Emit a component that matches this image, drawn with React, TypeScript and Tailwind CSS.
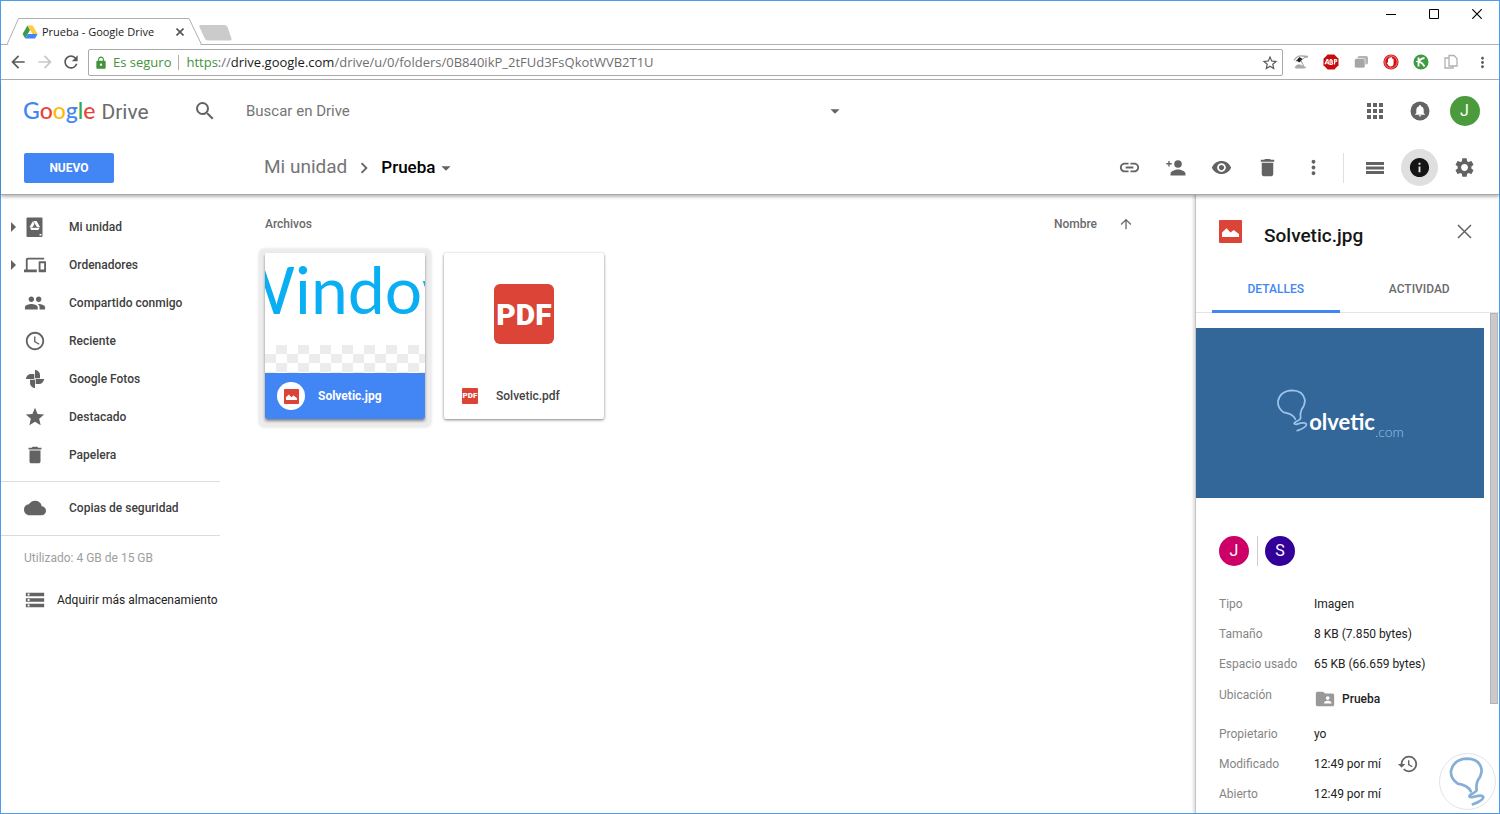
import type { ReactNode } from "react";
import {
  MdAccessTime,
  MdApps,
  MdArrowBack,
  MdArrowDropDown,
  MdArrowForward,
  MdArrowRight,
  MdArrowUpward,
  MdChevronRight,
  MdCloud,
  MdDelete,
  MdDevices,
  MdFolderShared,
  MdHistory,
  MdInfo,
  MdLink,
  MdLock,
  MdMoreVert,
  MdPeople,
  MdRefresh,
  MdRemoveRedEye,
  MdSearch,
  MdSettings,
  MdStar,
  MdStarBorder,
  MdStorage,
} from "react-icons/md";

const uiFont = "font-['Open_Sans','Noto_Sans',sans-serif]";

function DriveFavicon() {
  return (
    <svg width="16" height="16" viewBox="0 0 16 16" aria-hidden="true">
      <path d="M5.4 1.5 8 6 3.2 14.5.6 10z" fill="#3c9a4a" />
      <path d="M5.4 1.5h5.2L15.6 10h-5.2z" fill="#fdcb3f" />
      <path d="M5.9 10h9.7L13 14.5H3.2z" fill="#4285f4" />
    </svg>
  );
}

function BrowserTab() {
  return (
    <div className="relative ml-[6px] mt-[17px] h-[27px] w-[195px]">
      <svg
        className="absolute inset-0"
        width="195"
        height="27"
        viewBox="0 0 195 27"
        aria-hidden="true"
      >
        <path
          d="M0 26.5 L11.5 .5 H182 L194.5 26.5"
          fill="#fff"
          stroke="#b0b0b0"
        />
        <path d="M1.5 26.5H193" stroke="#fff" strokeWidth="1.2" />
      </svg>
      <div className="relative flex h-full items-center pl-[15px] pt-px text-[11px] text-[#1a1a1a]">
        <DriveFavicon />
        <span className="ml-[4px] w-[130px] whitespace-nowrap">
          Prueba - Google Drive
        </span>
        <button aria-label="Cerrar pestaña" className="flex w-4 justify-center">
          <svg width="8" height="8" viewBox="0 0 8 8">
            <path d="M.5.5l7 7M7.500.5l-7 7" stroke="#555" strokeWidth="1.6" />
          </svg>
        </button>
      </div>
    </div>
  );
}

function WindowBar() {
  return (
    <div className={`${uiFont} flex justify-between`}>
      <div className="flex flex-1 items-end border-b border-[#b0b0b0]">
        <div className="-mb-px flex items-end">
          <BrowserTab />
          <button aria-label="Nueva pestaña" className="-ml-[4px] pb-[3px]">
            <svg className="block" width="34" height="18" viewBox="0 0 34 18">
              <path
                d="M2.500 1h24q2 0 3 2l4 11.500q.6 2-2 2h-21.500q-2.500 0-3.500-2.500L1.300 2.500q-.4-1.500 1.200-1.500z"
                fill="#cbcbcb"
              />
            </svg>
          </button>
        </div>
      </div>
      <div className="flex h-[44px] items-start border-b border-[#b0b0b0] text-black">
        <button aria-label="Minimizar" className="flex w-[43px] justify-center pt-[8px]">
          <svg width="10" height="10" viewBox="0 0 10 10">
            <path d="M0 5.500h10" stroke="currentColor" />
          </svg>
        </button>
        <button aria-label="Maximizar" className="flex w-[43px] justify-center pt-[8px]">
          <svg width="10" height="10" viewBox="0 0 10 10">
            <path d="M.5.5h9v9h-9z" fill="none" stroke="currentColor" />
          </svg>
        </button>
        <button aria-label="Cerrar" className="flex w-[44px] justify-center pt-[8px]">
          <svg width="10" height="10" viewBox="0 0 10 10">
            <path d="M.3.300l9.400 9.400M9.700.3L.3 9.700" stroke="currentColor" strokeWidth="1.200" />
          </svg>
        </button>
      </div>
    </div>
  );
}

function Extension({ label, children }: { label: string; children: ReactNode }) {
  return (
    <button aria-label={label} className="flex w-[30px] justify-center">
      <svg width="16" height="16" viewBox="0 0 16 16">
        {children}
      </svg>
    </button>
  );
}

function AddressBar() {
  return (
    <div
      className={`${uiFont} flex h-[35px] items-center border-b border-[#b0b0b0] pl-[7px] text-[#5a5a5a]`}
    >
      <button aria-label="Atrás" className="w-[27px]">
        <MdArrowBack size={20} />
      </button>
      <button aria-label="Adelante" className="w-[26px] text-[#c8c8c8]">
        <MdArrowForward size={20} />
      </button>
      <button aria-label="Recargar" className="w-[27px]">
        <MdRefresh size={20} />
      </button>
      <div className="flex h-[27px] flex-1 items-center rounded-[2px] border border-[#a9a9a9] pl-[5px] pr-[3px] pt-px text-[13px]">
        <MdLock size={14} className="text-[#43933a]" />
        <span className="ml-[5px] whitespace-nowrap text-[#43933a]">Es seguro</span>
        <span className="mx-[7px] h-[15px] w-px bg-[#b0b0b0]" />
        <span className="flex-1 whitespace-nowrap text-[#6f6f6f]">
          <span className="text-[#43933a]">https</span>
          ://<span className="text-[#1a1a1a]">drive.google.com</span>
          /drive/u/0/folders/0B840ikP_2tFUd3FsQkotWVB2T1U
        </span>
        <button aria-label="Añadir a marcadores">
          <MdStarBorder size={18} />
        </button>
      </div>
      <div className="flex items-center pl-[3px]">
        <Extension label="Sombrilla">
          <path d="M1 6.500Q4 1.500 9 2l6 .5" stroke="#aaa" strokeWidth="1.300" fill="none" />
          <path d="M2.500 7.500 6.500 3l3 2-2 2.500-1.500 1-1.500-1.500z" fill="#222" />
          <path d="M8 6.500l3 6.500M9 5.500q3-3 5.500-2.500" stroke="#999" fill="none" />
          <path d="M1.500 13.500q2.500-4 5.500-3l6.500 3-2 1H3z" fill="#aaa" />
        </Extension>
        <Extension label="Bloqueador de anuncios">
          <path d="M4.700.5h6.600l4.200 4.200v6.600l-4.200 4.200H4.700L.5 11.300V4.700z" fill="#c70d0c" />
          <path
            d="M2 10.300 4 5.700h.8l.7 4.600M2.800 9h2.500M7 5.700v4.600h1.500q1.200-.2 1-1.300-.2-1-1.500-1 1.500-.2 1.200-1.300-.4-1-2.200-1M11.500 10.500V5.700h1.500q1 .2.800 1.200-.4 1-2 1"
            fill="none"
            stroke="#fff"
            strokeWidth="1.200"
          />
        </Extension>
        <Extension label="Ventanas">
          <rect x="4.500" y="2" width="10.500" height="8.500" rx="1.800" fill="#b4b4b4" />
          <rect x="1.500" y="4.500" width="10.500" height="9.500" rx="1.800" fill="#a6a6a6" stroke="#fff" strokeWidth=".6" />
        </Extension>
        <Extension label="Mano">
          <circle cx="8" cy="8" r="7.600" fill="#d50f0f" />
          <circle cx="8" cy="8" r="6.200" fill="none" stroke="#fff" strokeWidth=".5" />
          <path
            d="M5 8.500V5q.7-.8 1.300 0V3.800q.8-.9 1.500 0v-.5q.8-.8 1.400.2V5q.8-.7 1.400.2V9q.2 3.500-3 3.500Q5.500 12.500 3.700 9q.3-.9 1.300-.5z"
            fill="#fff"
          />
        </Extension>
        <Extension label="Kaspersky">
          <circle cx="8" cy="8" r="7.500" fill="#3d9b42" />
          <path d="M5.500 3.500v9M11.500 4q-5.500 1-5.500 4.500 2-1.500 5.500 4" fill="none" stroke="#fff" strokeWidth="1.800" />
          <path d="M3 7.500h4" stroke="#fff" />
        </Extension>
        <Extension label="Copiar">
          <path d="M6 1.500h5l3 3V12H6zM6 4H2v10h8v-2" fill="none" stroke="#b1b1b1" strokeWidth="1.300" />
        </Extension>
        <button aria-label="Menú" className="flex w-[33px] justify-center">
          <MdMoreVert size={17} />
        </button>
      </div>
    </div>
  );
}

function ActionButton({ label, children }: { label: string; children: ReactNode }) {
  return (
    <button aria-label={label} className="flex w-[45px] justify-center">
      {children}
    </button>
  );
}

function DriveHeader() {
  return (
    <header className="relative z-10 border-b border-[#a9a9a9] bg-white text-[#636363] shadow-[0_2px_3px_rgba(0,0,0,0.28)]">
      <div className="flex h-[61px] items-center pl-[22px] pr-[12px]">
        <a
          href="#inicio"
          className="flex w-[170px] items-baseline whitespace-nowrap leading-7"
        >
          <span className="font-['Lato',sans-serif] text-[23px] font-medium">
            <span className="text-[#4285f4]">G</span>
            <span className="text-[#ea4335]">o</span>
            <span className="text-[#fbbc05]">o</span>
            <span className="text-[#4285f4]">g</span>
            <span className="text-[#34a853]">l</span>
            <span className="text-[#ea4335]">e</span>
          </span>
          <span className="ml-[6px] text-[21px] text-[#6b6b6b]">Drive</span>
        </a>
        <button aria-label="Buscar">
          <MdSearch size={24} />
        </button>
        <input
          aria-label="Buscar en Drive"
          placeholder="Buscar en Drive"
          className="ml-[29px] w-[578px] pt-px text-[15px] outline-none placeholder:text-[#757575]"
        />
        <button aria-label="Opciones de búsqueda">
          <MdArrowDropDown size={22} />
        </button>
        <div className="ml-auto flex items-center">
          <ActionButton label="Aplicaciones">
            <MdApps size={24} />
          </ActionButton>
          <ActionButton label="Notificaciones">
            <svg width="20" height="20" viewBox="0 0 20 20">
              <circle cx="10" cy="10" r="9.500" fill="#636363" />
              <path
                d="M10 15.500a1.300 1.300 0 0 0 1.300-1.200H8.700A1.300 1.300 0 0 0 10 15.500zm3.700-3.200V9c0-2-1.100-3.400-2.800-3.800v-.4a.9.900 0 0 0-1.800 0v.4C7.400 5.600 6.300 7 6.300 9v3.300L5 13.300v.5h10v-.5z"
                fill="#fff"
              />
            </svg>
          </ActionButton>
          <ActionButton label="Cuenta de Google">
            <span className="flex size-[30px] items-center justify-center rounded-full bg-[#4b9a3b] text-base text-white">
              J
            </span>
          </ActionButton>
        </div>
      </div>
      <div className="flex h-[53px] items-center pl-[23px] pr-[12px]">
        <button className="h-[30px] w-[90px] rounded-[2px] bg-[#4285f4] text-xs font-bold text-white">
          NUEVO
        </button>
        <nav aria-label="Ruta" className="ml-[150px] flex items-center text-[19px]">
          <a href="#mi-unidad" className="text-[#757575]">
            Mi unidad
          </a>
          <MdChevronRight size={22} className="mx-[6px]" />
          <button className="flex items-center text-[17px] font-medium text-black">
            Prueba
            <MdArrowDropDown size={22} className="text-[#636363]" />
          </button>
        </nav>
        <div className="ml-auto flex items-center">
          <div className="flex items-center gap-px">
            <ActionButton label="Obtener enlace">
              <MdLink size={23} />
            </ActionButton>
            <ActionButton label="Compartir">
              <svg width="22" height="18" viewBox="0 0 22 18" fill="currentColor">
                <circle cx="13" cy="5" r="3.800" />
                <path d="M5.500 16.500V15c0-3 4.500-4.600 7.500-4.600s7.500 1.600 7.500 4.600v1.500zM3.300 2h1.400v2h2v1.400h-2v2H3.300v-2h-2V4h2z" />
              </svg>
            </ActionButton>
            <ActionButton label="Vista previa">
              <MdRemoveRedEye size={21} />
            </ActionButton>
            <ActionButton label="Eliminar">
              <MdDelete size={23} />
            </ActionButton>
            <ActionButton label="Más acciones">
              <MdMoreVert size={23} />
            </ActionButton>
          </div>
          <span className="ml-[7px] mr-[8px] h-[30px] w-px bg-[#e0e0e0]" />
          <ActionButton label="Vista de lista">
            <svg width="18" height="12" viewBox="0 0 18 12" fill="currentColor">
              <path d="M0 0h18v3H0zM0 4.500h18v3H0zM0 9h18v3H0z" />
            </svg>
          </ActionButton>
          <ActionButton label="Ver detalles">
            <span className="flex size-[37px] items-center justify-center rounded-full bg-[#dfdfdf] text-[#151515]">
              <MdInfo size={23} />
            </span>
          </ActionButton>
          <ActionButton label="Configuración">
            <MdSettings size={23} />
          </ActionButton>
        </div>
      </div>
    </header>
  );
}

function DriveFileIcon() {
  return (
    <svg width="22" height="22" viewBox="0 0 22 22">
      <path d="M3.500 1.500h14q1 0 1 1V20q0 1-1 1h-14q-1 0-1-1V2.500q0-1 1-1z" fill="#636363" />
      <path d="M9 5h3.600l3.400 6-1.700 3H7.300l-1.800-3z" fill="#fff" />
      <path d="M10.600 7.700 8.400 11.500h4.500z" fill="#636363" />
      <path d="M9 5l3.800 6.500M5.500 11 7.500 11.500M16 11.500H8" stroke="#636363" strokeWidth=".6" />
      <path d="M15.500 18h2v1.500h-2z" fill="#fff" />
    </svg>
  );
}

function PinwheelIcon() {
  return (
    <svg width="20" height="20" viewBox="0 0 20 20" fill="currentColor">
      <path d="M10 .8q5 1.200 5 5.200v3.300h-5zM19.200 10q-1.200 5-5.200 5h-3.300v-5zM10 19.200Q5 18 5 14v-3.300h5zM.8 10Q2 5 6 5h3.300v5z" />
    </svg>
  );
}

function NavItem({
  icon,
  label,
  expandable = false,
}: {
  icon: ReactNode;
  label: string;
  expandable?: boolean;
}) {
  return (
    <li>
      <a href="#carpeta" className="flex h-[38px] items-center">
        <span className="flex w-[22px] justify-center pl-[2px]">
          {expandable && <MdArrowRight size={24} className="shrink-0" />}
        </span>
        <span className="flex w-[24px] justify-center">{icon}</span>
        <span className="ml-[22px] whitespace-nowrap text-xs font-medium text-[#404040]">
          {label}
        </span>
      </a>
    </li>
  );
}

function Sidebar() {
  return (
    <aside className="w-[219px] shrink-0 pt-[13px] text-[#636363]">
      <ul className="pb-[7px]">
        <NavItem icon={<DriveFileIcon />} label="Mi unidad" expandable />
        <NavItem icon={<MdDevices size={22} />} label="Ordenadores" expandable />
        <NavItem icon={<MdPeople size={22} />} label="Compartido conmigo" />
        <NavItem icon={<MdAccessTime size={22} />} label="Reciente" />
        <NavItem icon={<PinwheelIcon />} label="Google Fotos" />
        <NavItem icon={<MdStar size={22} />} label="Destacado" />
        <NavItem icon={<MdDelete size={22} />} label="Papelera" />
      </ul>
      <ul className="border-y border-[#dcdcdc] pb-[8px] pt-[7px]">
        <NavItem icon={<MdCloud size={22} />} label="Copias de seguridad" />
      </ul>
      <p className="pl-[23px] pt-[12px] text-[12px] leading-5 text-[#9e9e9e]">
        Utilizado: 4 GB de 15 GB
      </p>
      <a
        href="#almacenamiento"
        className="mt-[21px] flex items-center whitespace-nowrap pl-[23px] text-[12px] text-[#222]"
      >
        <MdStorage size={22} className="text-[#636363]" />
        <span className="ml-[11px]">Adquirir más almacenamiento</span>
      </a>
    </aside>
  );
}

function ImageIcon({ size }: { size: number }) {
  return (
    <svg width={size} height={size} viewBox="0 0 23 23" aria-hidden="true">
      <rect width="23" height="23" rx="1" fill="#db4437" />
      <path d="M3 17v-4.500L7.500 8.300l4 4.200 3.200-2.500L20 14v3z" fill="#fff" />
    </svg>
  );
}

function Files() {
  return (
    <main className="min-w-0 flex-1 pl-[45px] pr-[61px] pt-[19px]">
      <div className="flex h-5 items-center justify-between text-xs font-medium text-[#6b6b6b]">
        <h2>Archivos</h2>
        <button className="flex items-center">
          Nombre
          <MdArrowUpward size={16} className="ml-[21px]" />
        </button>
      </div>
      <ul className="mt-[19px] flex gap-[19px]">
        <li className="w-[160px] rounded-[2px] shadow-[0_2px_3px_rgba(0,0,0,0.45),0_2px_2px_7px_#ececec]">
          <div className="flex h-[120px] flex-col justify-between overflow-hidden rounded-t-[2px] bg-white">
            <div className="-ml-[38px] whitespace-nowrap font-['Lato',sans-serif] text-[66px] leading-[72px] text-[#0aaef2]">
              Windows
            </div>
            <div className="h-[28px] bg-[repeating-conic-gradient(#ececec_0%_25%,#fff_0%_50%)] bg-[length:22px_18px]" />
          </div>
          <div className="flex h-[46px] items-center rounded-b-[2px] bg-[#4285f4] pl-[12px] text-xs font-bold text-white">
            <span className="flex size-[28px] items-center justify-center rounded-full bg-white">
              <ImageIcon size={15} />
            </span>
            <span className="ml-[13px]">Solvetic.jpg</span>
          </div>
        </li>
        <li className="w-[160px] rounded-[2px] shadow-[0_1px_3px_rgba(0,0,0,0.5)]">
          <div className="flex h-[120px] items-center justify-center pt-[2px]">
            <span className="flex size-[60px] items-center justify-center rounded-[6px] bg-[#db4437] text-[30px] font-black text-white">
              PDF
            </span>
          </div>
          <div className="flex h-[46px] items-center pl-[18px] text-xs font-medium text-[#444]">
            <span className="flex size-4 items-center justify-center rounded-[1px] bg-[#db4437] text-[8px] font-black leading-4 text-white">
              PDF
            </span>
            <span className="ml-[18px]">Solvetic.pdf</span>
          </div>
        </li>
      </ul>
    </main>
  );
}

function BulbOutline({ className }: { className: string }) {
  return (
    <svg className={className} viewBox="0 0 34 46" fill="none" stroke="currentColor" aria-hidden="true">
      <path
        d="M20 31.500Q17.500 26 8 24.500 1.200 20 1.800 13 4 2 16.500 1.500 28 1.500 30 11.500 30 17 26.500 21.500 24.500 26 25.500 30.500Q25 32 20 34.500 17 37 21 37 31 34 31.500 37 31.500 40 22 43.500"
        strokeLinejoin="round"
        strokeLinecap="round"
      />
    </svg>
  );
}

function DetailRow({ label, children }: { label: string; children: ReactNode }) {
  return (
    <div className="flex h-[30px] items-center">
      <dt className="w-[95px] shrink-0 text-[#858585]">{label}</dt>
      <dd className="flex items-center whitespace-nowrap">{children}</dd>
    </div>
  );
}

function DetailsPanel() {
  return (
    <section
      aria-label="Detalles"
      className="flex w-[304px] shrink-0 flex-col border-l border-[#c4c4c4] bg-white shadow-[-2px_0_2px_rgba(0,0,0,0.12)]"
    >
      <div className="flex h-[70px] items-center pl-[23px] pr-[27px] pt-[3px]">
        <ImageIcon size={23} />
        <h2 className="ml-[22px] mt-[10px] flex-1 text-[19px] font-medium text-[#151515]">
          Solvetic.jpg
        </h2>
        <button aria-label="Cerrar detalles">
          <svg width="15" height="15" viewBox="0 0 15 15">
            <path d="M1 1l13 13M14 1 1 14" stroke="#636363" strokeWidth="1.500" />
          </svg>
        </button>
      </div>
      <div className="flex h-[48px] border-b border-[#e5e5e5] px-[16px] text-xs font-medium">
        <button className="-mb-px w-[128px] border-b-[3px] border-[#4285f4] pt-[2px] text-[#4285f4]">
          DETALLES
        </button>
        <button className="ml-[16px] w-[128px] text-[#6b6b6b]">ACTIVIDAD</button>
      </div>
      <div className="flex flex-1">
        <div className="flex-1 pt-[15px]">
          <div className="flex h-[170px] items-center justify-center bg-[#336699] text-white">
            <BulbOutline className="-mt-[5px] h-[44px] w-[33px] stroke-[1.800] text-[#9cc4e8]" />
            <span className="mt-[17px] font-['Lato',sans-serif] text-[22px] font-bold">olvetic</span>
            <span className="mt-[37px] font-['Lato',sans-serif] text-[14px] font-light text-[#9cc4e8]">
              .com
            </span>
          </div>
          <div className="flex items-center pl-[23px] pt-[38px] text-base text-white">
            <span className="flex size-[30px] items-center justify-center rounded-full bg-[#cc0066]">
              J
            </span>
            <span className="ml-[8px] mr-[7px] h-[30px] w-px bg-[#cccccc]" />
            <span className="flex size-[30px] items-center justify-center rounded-full bg-[#330099]">
              S
            </span>
          </div>
          <dl className="pl-[23px] pt-[23px] text-xs text-[#222]">
            <DetailRow label="Tipo">Imagen</DetailRow>
            <DetailRow label="Tamaño">8 KB (7.850 bytes)</DetailRow>
            <DetailRow label="Espacio usado">65 KB (66.659 bytes)</DetailRow>
            <div className="flex h-[40px]">
              <dt className="w-[95px] pt-[8px] text-[#858585]">Ubicación</dt>
              <dd>
                <a href="#prueba" className="flex h-[39px] items-center font-medium">
                  <MdFolderShared size={22} className="mr-[6px] text-[#999]" />
                  Prueba
                </a>
              </dd>
            </div>
            <DetailRow label="Propietario">yo</DetailRow>
            <DetailRow label="Modificado">
              12:49 por mí
              <MdHistory size={22} className="ml-[16px] text-[#636363]" />
            </DetailRow>
            <DetailRow label="Abierto">12:49 por mí</DetailRow>
          </dl>
        </div>
        <div className="ml-[6px] mr-px w-[8px]">
          <div className="h-[391px] border border-[#b3b3b3] bg-[#cacaca]" />
        </div>
      </div>
    </section>
  );
}

export default function App() {
  return (
    <div className="relative flex min-h-screen flex-col border border-[#4a9ded] bg-white font-['Roboto',sans-serif]">
      <WindowBar />
      <AddressBar />
      <DriveHeader />
      <div className="flex flex-1">
        <Sidebar />
        <Files />
        <DetailsPanel />
      </div>
      <div className="absolute bottom-[3px] right-[3px] z-20 flex size-[57px] items-center justify-center rounded-full border border-[#dfe5ec] bg-white">
        <BulbOutline className="h-[50px] w-[37px] stroke-[2.500] text-[#86aed6]" />
      </div>
    </div>
  );
}
